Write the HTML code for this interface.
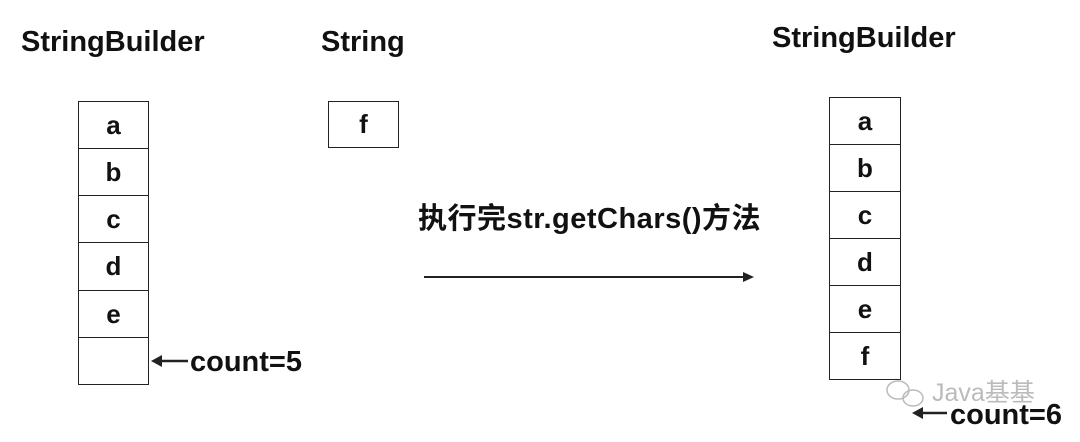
<!DOCTYPE html>
<html><head><meta charset="utf-8"><style>
body{margin:0;width:1080px;height:442px;background:#fff;position:relative;overflow:hidden;font-family:"Liberation Sans","Noto Sans CJK SC",sans-serif;font-weight:bold;color:#111}
.t{position:absolute;font-size:29px;line-height:1;white-space:nowrap}
.box{position:absolute;border:1.5px solid #222;box-sizing:border-box;display:flex;align-items:center;justify-content:center;font-size:26px;background:#fff}
</style></head><body>
<div class="t" style="left:21px;top:28px">StringBuilder</div>
<div class="t" style="left:321px;top:28px">String</div>
<div class="t" style="left:772px;top:24px">StringBuilder</div>

<div class="box" style="left:78px;top:101px;width:71px;height:48px">a</div>
<div class="box" style="left:78px;top:148px;width:71px;height:48px">b</div>
<div class="box" style="left:78px;top:195px;width:71px;height:48px">c</div>
<div class="box" style="left:78px;top:242px;width:71px;height:49px">d</div>
<div class="box" style="left:78px;top:290px;width:71px;height:48px">e</div>
<div class="box" style="left:78px;top:337px;width:71px;height:48px"></div>

<div class="box" style="left:328px;top:101px;width:71px;height:47px">f</div>

<div class="box" style="left:829px;top:97px;width:72px;height:48px">a</div>
<div class="box" style="left:829px;top:144px;width:72px;height:48px">b</div>
<div class="box" style="left:829px;top:191px;width:72px;height:48px">c</div>
<div class="box" style="left:829px;top:238px;width:72px;height:48px">d</div>
<div class="box" style="left:829px;top:285px;width:72px;height:48px">e</div>
<div class="box" style="left:829px;top:332px;width:72px;height:48px">f</div>

<div class="t" style="left:418px;top:205px;font-size:29px;letter-spacing:0.5px">执行完str.getChars()方法</div>

<svg style="position:absolute;left:0;top:0" width="1080" height="442">
<line x1="424" y1="277" x2="745" y2="277" stroke="#222" stroke-width="2"/>
<polygon points="754,277 743,272 743,282" fill="#222"/>
<line x1="160" y1="361" x2="188" y2="361" stroke="#222" stroke-width="2.5"/>
<polygon points="151,361 162,355 162,367" fill="#222"/>
<line x1="921" y1="413" x2="947" y2="413" stroke="#222" stroke-width="2.5"/>
<polygon points="912,413 923,407 923,419" fill="#222"/>
<g fill="none" stroke="#bbb" stroke-width="1.5">
<ellipse cx="898" cy="390" rx="11" ry="9"/>
<ellipse cx="913" cy="398" rx="10" ry="8"/>
</g>
</svg>
<div class="t" style="left:932px;top:381px;font-size:25px;font-weight:normal;color:#bbb">Java基基</div>
<div class="t" style="left:190px;top:348px">count=5</div>
<div class="t" style="left:950px;top:401px">count=6</div>
</body></html>
